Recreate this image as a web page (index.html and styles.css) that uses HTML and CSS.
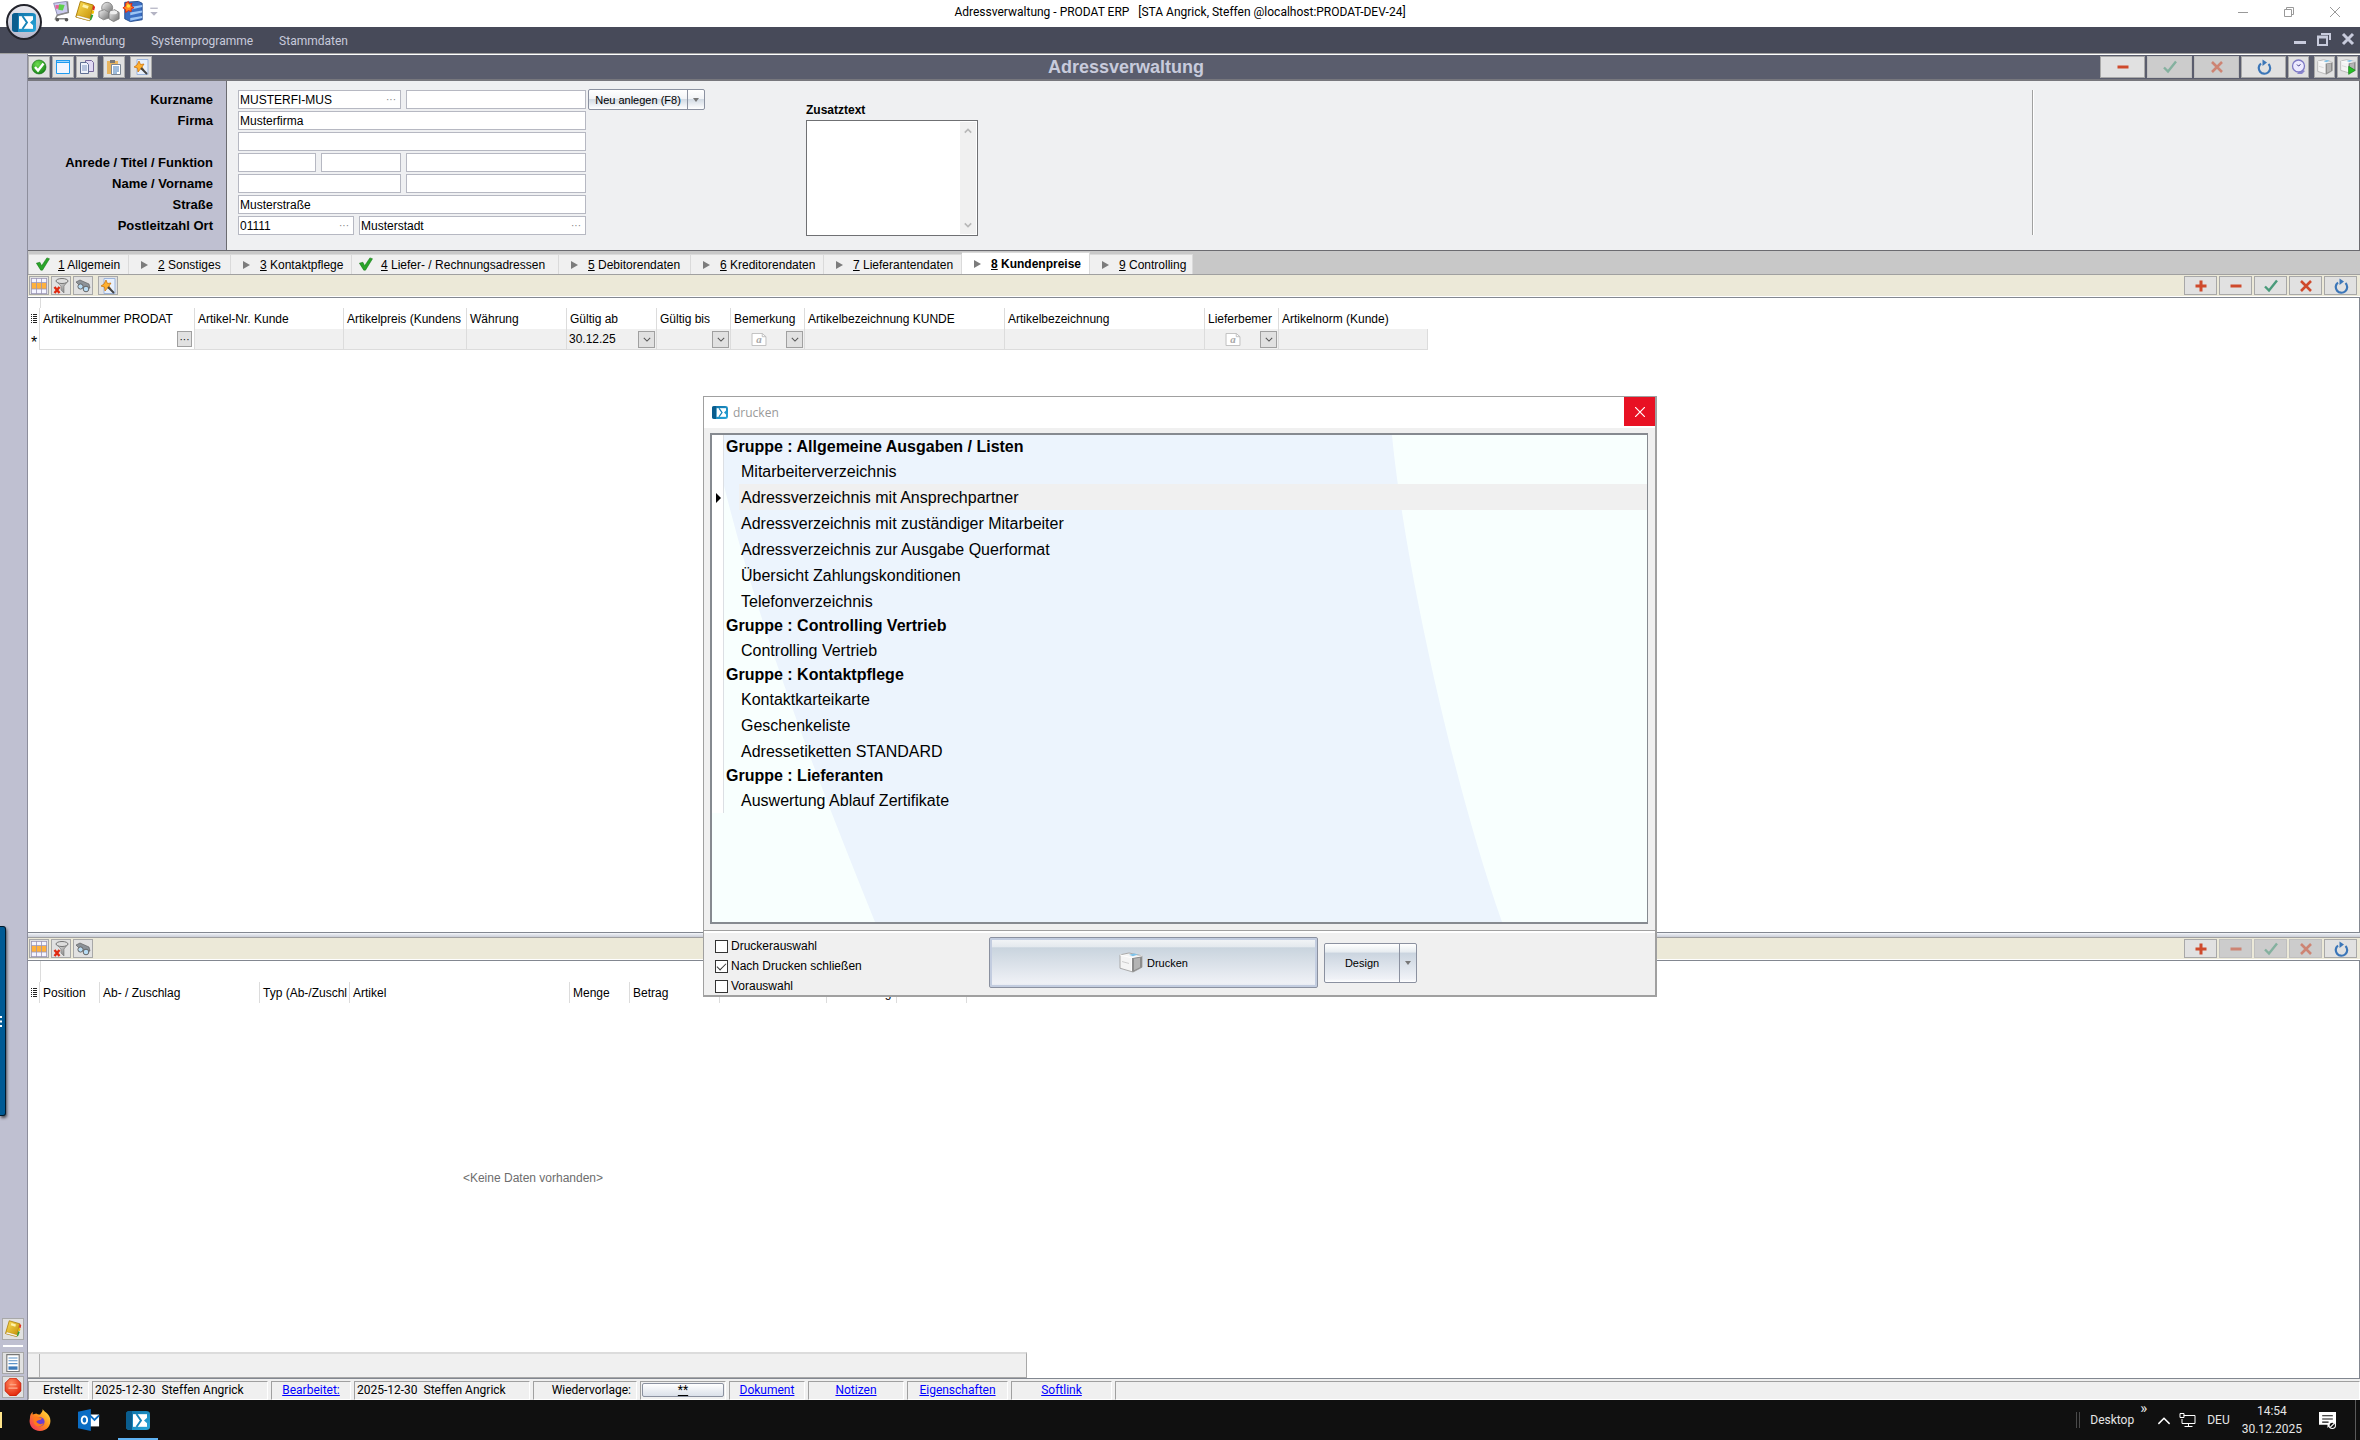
FILE: index.html
```html
<!DOCTYPE html>
<html lang="de">
<head>
    <meta charset="UTF-8">
    <meta name="viewport" content="width=device-width, initial-scale=1.0">
    <title>Adressverwaltung - PRODAT ERP</title>
    <link rel="stylesheet" href="styles.css">
</head>
<body>

    <!-- Symbole -->
    <svg class="defs" width="0" height="0" aria-hidden="true">
        <defs>
            <linearGradient id="gBlue" x1="0" y1="0" x2="1" y2="1"><stop offset="0" stop-color="#0d6ea3"/><stop offset="1" stop-color="#29a8dc"/></linearGradient>
            <linearGradient id="gGold" x1="0" y1="0" x2="1" y2="1"><stop offset="0" stop-color="#ffe25a"/><stop offset="1" stop-color="#c08a00"/></linearGradient>
            <linearGradient id="gGray" x1="0" y1="0" x2="1" y2="1"><stop offset="0" stop-color="#f4f4f4"/><stop offset="1" stop-color="#6e6e6e"/></linearGradient>
            <radialGradient id="gGreen" cx=".4" cy=".3" r=".8"><stop offset="0" stop-color="#6ddc4f"/><stop offset="1" stop-color="#0d7c10"/></radialGradient>
            <radialGradient id="gRed" cx=".4" cy=".3" r=".8"><stop offset="0" stop-color="#ff8a60"/><stop offset="1" stop-color="#e01a00"/></radialGradient>
            <linearGradient id="gFox" x1="1" y1="0" x2="0" y2="1"><stop offset="0" stop-color="#fff04a"/><stop offset=".5" stop-color="#ff8a1c"/><stop offset="1" stop-color="#f0246a"/></linearGradient>
            <symbol id="logo" viewBox="0 0 24 24" preserveAspectRatio="none">
                <rect x="0" y="0" width="24" height="24" rx="4" fill="url(#gBlue)"/>
                <path d="M0 4q0-4 4-4h2v24H4q-4 0-4-4z" fill="#0a5d8e"/>
                <path d="M7 4h14v16H7z" fill="#fff"/>
                <path d="M10.500 4l4.500 8-4.500 8" stroke="#1583b8" stroke-width="2" fill="none"/>
                <path d="M21 8.500L18 12l3 3.500z" fill="#1f97cc"/>
            </symbol>
            <symbol id="cart" viewBox="0 0 24 24">
                <path d="M4 3l14-2 2 12-12 3z" fill="#c9c9ee" stroke="#8d8db0"/>
                <path d="M6 5h4v4H6z" fill="#e8609a"/><path d="M10 4l6 1-2 6-5-1z" fill="#5ed04c"/>
                <path d="M19 1l1 12-12 3-2 4h13" stroke="#888" stroke-width="1.600" fill="none"/>
                <circle cx="8" cy="21" r="2" fill="#555"/><circle cx="18" cy="21" r="2" fill="#555"/>
            </symbol>
            <symbol id="book" viewBox="0 0 24 24">
                <path d="M7 1l14 4-4 17-15-4z" fill="url(#gGold)" stroke="#a87800"/>
                <path d="M2 18l15 4 1-2L4 16z" fill="#fff" stroke="#a87800" stroke-width=".5"/>
                <path d="M21 5l2 2-1 4-2-1z" fill="#e03020"/><path d="M20 10l2 2-1 3-2-1z" fill="#f0c000"/><path d="M19 15l2 1-2 5-2 1z" fill="#30a030"/>
                <path d="M10 4l6 2-1 3-6-2z" fill="#fff3a8"/>
            </symbol>
            <symbol id="parts" viewBox="0 0 24 24">
                <circle cx="10" cy="8" r="6" fill="url(#gGray)" stroke="#888"/>
                <path d="M1 12l6-2 5 3v6l-6 2-5-3z" fill="url(#gGray)" stroke="#888"/>
                <path d="M12 13l6-3 5 3v7l-6 3-5-3z" fill="url(#gGray)" stroke="#777"/>
                <ellipse cx="17" cy="13" rx="4" ry="2" fill="#eee"/>
            </symbol>
            <symbol id="server" viewBox="0 0 24 24">
                <path d="M3 2l15-1 4 2v18l-13 2-6-3z" fill="#3b6fc4" stroke="#234b8c"/>
                <path d="M9 7l13-2v2L9 10zM9 13l13-2v2L9 16zM9 19l13-2v2L9 22z" fill="#9cc4f4"/>
                <path d="M7 1l1 3 3-1-1 3 3 2-3 1 0 3-3-1-3 2 0-3-3-2 3-2 0-3z" fill="#ff8a20" stroke="#e02010"/>
                <circle cx="7" cy="6" r="2" fill="#ffe040"/>
            </symbol>
            <symbol id="ok" viewBox="0 0 16 16">
                <circle cx="8" cy="8" r="7" fill="url(#gGreen)" stroke="#0a6a0c" stroke-width=".6"/>
                <path d="M4 8l3 3.500 5.500-7" stroke="#fff" stroke-width="2.400" fill="none"/>
            </symbol>
            <symbol id="window" viewBox="0 0 16 16">
                <path d="M1.500 1.500h13v13h-13z" fill="#f2f6ff" stroke="#1e9bf0"/><path d="M1 1h14v3H1z" fill="#1e9bf0"/><path d="M2 2h12v.800H2z" fill="#bfe3ff"/>
            </symbol>
            <symbol id="copy" viewBox="0 0 16 16">
                <path d="M6.500 1.500h6l2 2v9h-8z" fill="#e2daf4" stroke="#77689c"/>
                <path d="M1.500 3.500h6l2 2v9h-8z" fill="#eef2fb" stroke="#5f6f94"/><path d="M3 7h5M3 9h5M3 11h5" stroke="#7f93c0"/>
            </symbol>
            <symbol id="paste" viewBox="0 0 16 16">
                <path d="M1 2h11v13H1z" fill="#e9b55f"/><path d="M4 1h5v3H4z" fill="#777"/>
                <path d="M5.500 5.500h9v10h-9z" fill="#fff" stroke="#7c8794"/><path d="M7 8h6M7 10h6M7 12h6M7 14h4" stroke="#3f78b8"/>
            </symbol>
            <symbol id="wizard" viewBox="0 0 16 16">
                <path d="M4 .500h11v15H4z" fill="#e8f0fc" stroke="#9db5dc"/>
                <path d="M6 2l1.500 3.500 3.500-.500-2 3 2 3-3.500-1L5 13l-.500-4L1 8l3-2z" fill="#ffb02e" stroke="#c86c00" stroke-width=".7"/>
                <path d="M8 9l6 6" stroke="#444" stroke-width="2"/>
            </symbol>
            <symbol id="minus" viewBox="0 0 16 16"><path d="M2.500 8h11" stroke="#cf4a2c" stroke-width="3"/></symbol>
            <symbol id="plus" viewBox="0 0 16 16"><path d="M2.500 8h11M8 2.500v11" stroke="#cf4a2c" stroke-width="3"/></symbol>
            <symbol id="check" viewBox="0 0 16 16"><path d="M2 8.500l4 4 8-10" stroke="#4a9b7b" stroke-width="2.400" fill="none"/></symbol>
            <symbol id="cross" viewBox="0 0 16 16"><path d="M3 3l10 10M13 3L3 13" stroke="#cf4a2c" stroke-width="2.600"/></symbol>
            <symbol id="refresh" viewBox="0 0 16 16"><path d="M5 4.500A5.700 5.700 0 1 0 12.500 5" stroke="#3b76b8" stroke-width="2.200" fill="none"/><path d="M6.500 .500l4.500 3-4.500 3.500z" fill="#3b76b8"/></symbol>
            <symbol id="clock" viewBox="0 0 16 16">
                <path d="M10 10l4 2-3 3H6z" fill="#8a86cc"/><circle cx="7.500" cy="7" r="6" fill="#eceaff" stroke="#7d79c4" stroke-width="1.300"/><path d="M7.500 7l2-1.500M7.500 7L6 5.500" stroke="#3a3680"/>
            </symbol>
            <symbol id="printer" viewBox="0 0 24 22" preserveAspectRatio="none">
                <path d="M1 3l9-2 13 3v12l-9 5-13-4z" fill="#f4f4f4" stroke="#a8a8a8"/>
                <path d="M12 6l11-2v12l-9 5-2-1z" fill="#8c8c8c"/><path d="M15 7l6-1v10l-6 3z" fill="#b4b4b4"/>
                <path d="M10 3l5-1.500 4 1-5 2z" fill="#7fc3ea"/><path d="M12.500 6v14M1 3l11 3 11-2" stroke="#fff" fill="none"/>
                <path d="M3 10l7 2" stroke="#ccc"/>
            </symbol>
            <symbol id="play" viewBox="0 0 24 24"><use href="#printer" width="24" height="22"/><path d="M13 11l10 6-10 6z" fill="#25c025" stroke="#128012"/></symbol>
            <symbol id="tick" viewBox="0 0 16 16"><path d="M1 7l4-1 2 4 6-9 3 1-8 13H6z" fill="#2aa52a" stroke="#137313" stroke-width=".6"/></symbol>
            <symbol id="grid" viewBox="0 0 16 16">
                <path d="M0 0h16v16H0z" fill="#f4f4ff"/><path d="M0 5h16v6H0z" fill="#ffb13c"/><path d="M0 .500h16M0 4.500h16M0 11h16M0 15.500h16M.500 0v16M5.500 0v16M10.500 0v16M15.500 0v16" stroke="#9a96b4" stroke-width=".8"/>
            </symbol>
            <symbol id="filter" viewBox="0 0 16 16">
                <path d="M3 3l5 5v4l3 3V8l4-5z" fill="url(#gGray)" stroke="#777" stroke-width=".6"/><ellipse cx="9" cy="3" rx="6" ry="2.500" fill="#ddd" stroke="#777"/>
                <path d="M1.500 9l5 6M6.500 9l-5 6" stroke="#e02a10" stroke-width="2.400"/>
            </symbol>
            <symbol id="search" viewBox="0 0 16 16">
                <path d="M1 4l4-2 9 4 1 4-4 1-6-3z" fill="#8c9298" stroke="#555" stroke-width=".6"/>
                <circle cx="5.500" cy="8.500" r="2.600" fill="#b8dcf4" stroke="#666"/><circle cx="11" cy="11" r="2.800" fill="#b8dcf4" stroke="#666"/>
            </symbol>
            <symbol id="memo" viewBox="0 0 16 14"><path d="M.500.500h11l4 3.500v9.500H.500z" fill="#fff" stroke="#bcbcbc"/><path d="M11.500.500V4h4" fill="none" stroke="#bcbcbc"/></symbol>
            <symbol id="chevron" viewBox="0 0 10 6"><path d="M1 1l4 4 4-4" stroke="#555" stroke-width="1.300" fill="none"/></symbol>
            <symbol id="caret" viewBox="0 0 6 4"><path d="M0 0h6L3 4z" fill="#777"/></symbol>
            <symbol id="doc" viewBox="0 0 16 16"><path d="M2.500 .500h11v15h-11z" fill="#fff" stroke="#777"/><path d="M4 3.500h8M4 6h8M4 8.500h8" stroke="#5c93c8"/><path d="M4 11h8v3H4z" fill="#3d7ab8"/></symbol>
            <symbol id="stop" viewBox="0 0 16 16"><path d="M5.500 0h5L15 4.500v7L10.500 16h-5L1 11.500v-7z" fill="url(#gRed)" stroke="#b81200" stroke-width=".6"/><path d="M4 9h8M5 6h6" stroke="#ffb090"/></symbol>
        </defs>
    </svg>

    <header class="titlebar">
        <button class="app-button" aria-label="Anwendungsmenü"><svg><use href="#logo"/></svg></button>
        <div class="quick">
            <button aria-label="Bestellung"><svg><use href="#cart"/></svg></button>
            <button aria-label="Adressen"><svg><use href="#book"/></svg></button>
            <button aria-label="Artikel"><svg><use href="#parts"/></svg></button>
            <button aria-label="Server"><svg><use href="#server"/></svg></button>
            <button class="more" aria-label="Anpassen"><svg viewBox="0 0 6 8"><path d="M0 1h6" stroke="#b4b4c4"/><path d="M0 4h6L3 7z" fill="#b4b4c4"/></svg></button>
        </div>
        <h1 class="window-title">Adressverwaltung - PRODAT ERP &nbsp; [STA Angrick, Steffen @localhost:PRODAT-DEV-24]</h1>
        <div class="window-buttons">
            <button aria-label="Minimieren"><svg viewBox="0 0 12 12"><path d="M1 6.500h10" stroke="#999"/></svg></button>
            <button aria-label="Wiederherstellen"><svg viewBox="0 0 12 12"><path d="M1.500 3.500h7v7h-7zM3.500 3V1.500h7v7H9" fill="none" stroke="#999"/></svg></button>
            <button aria-label="Schließen"><svg viewBox="0 0 12 12"><path d="M1 1l10 10M11 1L1 11" stroke="#999"/></svg></button>
        </div>
    </header>

    <nav class="menubar">
        <button>Anwendung</button>
        <button>Systemprogramme</button>
        <button>Stammdaten</button>
        <div class="mdi-buttons">
            <button aria-label="Fenster minimieren"><svg viewBox="0 0 14 14"><path d="M1 10.500h12" stroke="#c8cbdc" stroke-width="3"/></svg></button>
            <button aria-label="Fenster wiederherstellen"><svg viewBox="0 0 14 14"><path d="M1 5h9v8H1zM4 2h9v6" fill="none" stroke="#c8cbdc" stroke-width="2"/><path d="M0 5h11" stroke="#c8cbdc" stroke-width="3"/></svg></button>
            <button aria-label="Fenster schließen"><svg viewBox="0 0 14 14"><path d="M2 2l10 10M12 2L2 12" stroke="#c8cbdc" stroke-width="3"/></svg></button>
        </div>
    </nav>

    <div class="workspace">
        <aside class="sidebar">
            <div class="flyout"><svg viewBox="0 0 3 11"><path d="M0 1h2M0 5.500h2M0 10h2" stroke="#fff" stroke-width="2"/></svg></div>
            <button class="tool side" aria-label="Adressen"><svg><use href="#book"/></svg></button>
            <hr>
            <button class="tool side" aria-label="Protokoll"><svg><use href="#doc"/></svg></button>
            <button class="tool side" aria-label="Stopp"><svg><use href="#stop"/></svg></button>
        </aside>

        <main class="main">
            <div class="toolbar">
                <button class="tool" aria-label="Übernehmen"><svg><use href="#ok"/></svg></button>
                <button class="tool" aria-label="Neues Fenster"><svg><use href="#window"/></svg></button>
                <button class="tool" aria-label="Kopieren"><svg><use href="#copy"/></svg></button>
                <button class="tool spaced" aria-label="Einfügen"><svg><use href="#paste"/></svg></button>
                <button class="tool spaced" aria-label="Assistent"><svg><use href="#wizard"/></svg></button>
                <h2 class="module-title">Adressverwaltung</h2>
                <div class="record">
                    <button class="tool wide" aria-label="Löschen"><svg><use href="#minus"/></svg></button>
                    <button class="tool wide" aria-label="Speichern" disabled><svg><use href="#check"/></svg></button>
                    <button class="tool wide" aria-label="Verwerfen" disabled><svg><use href="#cross"/></svg></button>
                    <button class="tool wide" aria-label="Aktualisieren"><svg><use href="#refresh"/></svg></button>
                    <button class="tool" aria-label="Verlauf"><svg><use href="#clock"/></svg></button>
                    <button class="tool spaced" aria-label="Drucken"><svg><use href="#printer"/></svg></button>
                    <button class="tool" aria-label="Direkt drucken"><svg><use href="#play"/></svg></button>
                </div>
            </div>

            <form class="address">
                <div class="labels">
                    <label for="kurzname">Kurzname</label>
                    <label for="firma">Firma</label>
                    <span></span>
                    <label for="anrede">Anrede / Titel / Funktion</label>
                    <label for="name">Name / Vorname</label>
                    <label for="strasse">Straße</label>
                    <label for="plz">Postleitzahl Ort</label>
                </div>
                <div class="fields">
                    <div class="field-row">
                        <span class="lookup w-m"><input type="text" id="kurzname" value="MUSTERFI-MUS"><button type="button" aria-label="Kurzname suchen">···</button></span>
                        <input type="text" class="w-rest" aria-label="Suchname">
                    </div>
                    <div class="field-row"><input type="text" id="firma" class="w-rest" value="Musterfirma"></div>
                    <div class="field-row"><input type="text" class="w-rest" aria-label="Firma Zeile 2"></div>
                    <div class="field-row">
                        <input type="text" id="anrede" class="w-s" aria-label="Anrede">
                        <input type="text" class="w-t" aria-label="Titel">
                        <input type="text" class="w-rest" aria-label="Funktion">
                    </div>
                    <div class="field-row">
                        <input type="text" id="name" class="w-m">
                        <input type="text" class="w-rest" aria-label="Vorname">
                    </div>
                    <div class="field-row"><input type="text" id="strasse" class="w-rest" value="Musterstraße"></div>
                    <div class="field-row">
                        <span class="lookup w-p"><input type="text" id="plz" value="01111"><button type="button" aria-label="PLZ suchen">···</button></span>
                        <span class="lookup w-rest"><input type="text" value="Musterstadt" aria-label="Ort"><button type="button" aria-label="Ort suchen">···</button></span>
                    </div>
                </div>
                <div class="split-button create">
                    <button type="button">Neu anlegen (F8)</button>
                    <button type="button" aria-label="Weitere Optionen"><svg><use href="#caret"/></svg></button>
                </div>
                <div class="extra">
                    <label for="zusatz">Zusatztext</label>
                    <div class="memo-box">
                        <textarea id="zusatz"></textarea>
                        <div class="scroll">
                            <svg viewBox="0 0 10 6"><path d="M1 5l4-4 4 4" stroke="#b8b8b8" stroke-width="2" fill="none"/></svg>
                            <svg viewBox="0 0 10 6"><path d="M1 1l4 4 4-4" stroke="#b8b8b8" stroke-width="2" fill="none"/></svg>
                        </div>
                    </div>
                </div>
                <div class="divider"></div>
            </form>

            <div class="tabs" role="tablist">
                <button role="tab"><svg class="done"><use href="#tick"/></svg><span><u>1</u> Allgemein</span></button>
                <button role="tab"><i></i><span><u>2</u> Sonstiges</span></button>
                <button role="tab"><i></i><span><u>3</u> Kontaktpflege</span></button>
                <button role="tab"><svg class="done"><use href="#tick"/></svg><span><u>4</u> Liefer- / Rechnungsadressen</span></button>
                <button role="tab"><i></i><span><u>5</u> Debitorendaten</span></button>
                <button role="tab"><i></i><span><u>6</u> Kreditorendaten</span></button>
                <button role="tab"><i></i><span><u>7</u> Lieferantendaten</span></button>
                <button role="tab" aria-selected="true"><i></i><span><u>8</u> Kundenpreise</span></button>
                <button role="tab"><i></i><span><u>9</u> Controlling</span></button>
            </div>

            <div class="gridbar">
                <button class="tool" aria-label="Spalten"><svg><use href="#grid"/></svg></button>
                <button class="tool" aria-label="Filter löschen"><svg><use href="#filter"/></svg></button>
                <button class="tool" aria-label="Suchen"><svg><use href="#search"/></svg></button>
                <button class="tool spaced" aria-label="Assistent"><svg><use href="#wizard"/></svg></button>
                <div class="actions">
                    <button class="tool" aria-label="Neu"><svg><use href="#plus"/></svg></button>
                    <button class="tool" aria-label="Löschen"><svg><use href="#minus"/></svg></button>
                    <button class="tool" aria-label="Speichern"><svg><use href="#check"/></svg></button>
                    <button class="tool" aria-label="Verwerfen"><svg><use href="#cross"/></svg></button>
                    <button class="tool" aria-label="Aktualisieren"><svg><use href="#refresh"/></svg></button>
                </div>
            </div>

            <section class="panel prices">
                <table class="data prices-table">
                    <colgroup><col class="c11"><col class="c155"><col class="c149"><col class="c123"><col class="c100"><col class="c90"><col class="c74"><col class="c74"><col class="c200"><col class="c200"><col class="c74"><col class="c150"></colgroup>
                    <thead>
                        <tr>
                            <th><svg class="rows" viewBox="0 0 6 10"><path d="M0 .500h1M2 .500h4M0 2.500h1M2 2.500h4M0 4.500h1M2 4.500h4M0 6.500h1M2 6.500h4M0 8.500h1M2 8.500h4" stroke="#222"/></svg></th>
                            <th>Artikelnummer PRODAT</th><th>Artikel-Nr. Kunde</th><th>Artikelpreis (Kundens</th><th>Währung</th><th>Gültig ab</th><th>Gültig bis</th><th>Bemerkung</th><th>Artikelbezeichnung KUNDE</th><th>Artikelbezeichnung</th><th>Lieferbemer</th><th>Artikelnorm (Kunde)</th>
                        </tr>
                    </thead>
                    <tbody>
                        <tr>
                            <td class="new-row">*</td>
                            <td><div class="cell"><button class="mini dots" aria-label="Artikel wählen">···</button></div></td>
                            <td></td><td></td><td></td>
                            <td><div class="cell"><span>30.12.25</span><button class="mini" aria-label="Datum wählen"><svg><use href="#chevron"/></svg></button></div></td>
                            <td><div class="cell"><button class="mini" aria-label="Datum wählen"><svg><use href="#chevron"/></svg></button></div></td>
                            <td><div class="cell"><span class="memo"><svg><use href="#memo"/></svg><b>a</b></span><button class="mini" aria-label="Bemerkung öffnen"><svg><use href="#chevron"/></svg></button></div></td>
                            <td></td><td></td>
                            <td><div class="cell"><span class="memo"><svg><use href="#memo"/></svg><b>a</b></span><button class="mini" aria-label="Lieferbemerkung öffnen"><svg><use href="#chevron"/></svg></button></div></td>
                            <td></td>
                        </tr>
                    </tbody>
                </table>
            </section>

            <div class="splitter"></div>

            <div class="gridbar">
                <button class="tool" aria-label="Spalten"><svg><use href="#grid"/></svg></button>
                <button class="tool" aria-label="Filter löschen"><svg><use href="#filter"/></svg></button>
                <button class="tool" aria-label="Suchen"><svg><use href="#search"/></svg></button>
                <div class="actions">
                    <button class="tool" aria-label="Neu"><svg><use href="#plus"/></svg></button>
                    <button class="tool" aria-label="Löschen" disabled><svg><use href="#minus"/></svg></button>
                    <button class="tool" aria-label="Speichern" disabled><svg><use href="#check"/></svg></button>
                    <button class="tool" aria-label="Verwerfen" disabled><svg><use href="#cross"/></svg></button>
                    <button class="tool" aria-label="Aktualisieren"><svg><use href="#refresh"/></svg></button>
                </div>
            </div>

            <section class="panel charges">
                <table class="data charges-table">
                    <colgroup><col class="c11"><col class="c60"><col class="c160"><col class="c90"><col class="c220"><col class="c60"><col class="c90"><col class="c107"><col class="c70"><col class="c70"><col class="c60"></colgroup>
                    <thead>
                        <tr>
                            <th><svg class="rows" viewBox="0 0 6 10"><path d="M0 .500h1M2 .500h4M0 2.500h1M2 2.500h4M0 4.500h1M2 4.500h4M0 6.500h1M2 6.500h4M0 8.500h1M2 8.500h4" stroke="#222"/></svg></th>
                            <th>Position</th><th>Ab- / Zuschlag</th><th>Typ (Ab-/Zuschl</th><th>Artikel</th><th>Menge</th><th>Betrag</th><th>Prozent</th><th>Bemerkung</th><th>Status Kont</th><th>Skontofäh.</th>
                        </tr>
                    </thead>
                </table>
                <p class="empty">&lt;Keine Daten vorhanden&gt;</p>
                <div class="grid-footer"><span></span></div>
            </section>

            <footer class="status">
                <span class="s61 right">Erstellt:</span>
                <span class="s176">2025-12-30 &nbsp;Steffen Angrick</span>
                <span class="s80 center"><a href="#">Bearbeitet:</a></span>
                <span class="s176">2025-12-30 &nbsp;Steffen Angrick</span>
                <span class="s104 right">Wiedervorlage:</span>
                <span class="s86 slot"><button><u>**</u></button></span>
                <span class="s76 center"><a href="#">Dokument</a></span>
                <span class="s96 center"><a href="#">Notizen</a></span>
                <span class="s101 center"><a href="#">Eigenschaften</a></span>
                <span class="s101 center"><a href="#">Softlink</a></span>
                <span class="fill"></span>
            </footer>
        </main>
    </div>

    <footer class="taskbar">
        <div class="apps">
            <span class="sliver"></span>
            <button aria-label="Firefox"><svg viewBox="0 0 24 24"><path d="M15 0c1 3 6 4 8 10 2 8-4 14-11 14S-1 18 1 10c0-3 1-5 3-7v3l4-1c1 1 2 1 4 1 2-2 3-4 3-6z" fill="url(#gFox)"/><circle cx="12" cy="14" r="5" fill="#6a3fd0"/><path d="M5 9c4-2 6 1 9 1-1 3-4 1-6 4 1 2 5 4 8 1-1 5-10 6-11-1z" fill="#ff7a1c"/></svg></button>
            <button aria-label="Outlook"><svg viewBox="0 0 24 24"><path d="M13 6h10v13H13z" fill="#fff"/><path d="M13 7l5 5 5-5" stroke="#0a6cc4" stroke-width="2" fill="none"/><path d="M0 3l14-3v24L0 21z" fill="#0a6cc4"/><ellipse cx="7" cy="12" rx="3" ry="4" fill="none" stroke="#fff" stroke-width="2"/></svg></button>
            <button class="active" aria-label="PRODAT ERP"><svg><use href="#logo"/></svg></button>
        </div>
        <div class="tray">
            <span class="grip"></span>
            <span class="desk">Desktop</span>
            <span class="expand">»</span>
            <svg class="up" viewBox="0 0 12 8"><path d="M1 7l5-5 5 5" stroke="#fff" stroke-width="1.300" fill="none"/></svg>
            <svg class="net" viewBox="0 0 16 16"><path d="M4 3.500h11.500v8H2.500V7M.500 1.500h4v4h-4zM9 12v2.500M5 14.500h8" stroke="#fff" fill="none"/></svg>
            <span class="lang">DEU</span>
            <time class="clock">14:54<br>30.12.2025</time>
            <svg class="note" viewBox="0 0 16 16"><path d="M0 0h16v12h-5l-3 3v-3H0z" fill="#fff"/><path d="M3 3.500h10M3 6.500h10M3 9.500h6" stroke="#111"/><circle cx="12.500" cy="12.500" r="3" fill="#111" stroke="#fff"/><path d="M10.500 14.500l4-4" stroke="#fff"/></svg>
            <span class="show-desktop"></span>
        </div>
    </footer>

    <!-- Druckdialog -->
    <div class="overlay">
        <div class="dialog" role="dialog" aria-labelledby="dialogTitle">
            <div class="dialog-head">
                <svg><use href="#logo"/></svg>
                <span id="dialogTitle">drucken</span>
                <button class="close" aria-label="Schließen"><svg viewBox="0 0 10 10"><path d="M0 0l10 10M10 0L0 10" stroke="#fff" stroke-width="1.200"/></svg></button>
            </div>
            <div class="report-list">
                <svg class="backdrop" viewBox="0 0 935 487" preserveAspectRatio="none"><path d="M0 0H680C690 108 735 330 790 487H163C100 330 40 180 0 0z" fill="#ecf4fd"/></svg>
                <ul class="reports">
                    <li class="group">Gruppe : Allgemeine Ausgaben / Listen</li>
                    <li>Mitarbeiterverzeichnis</li>
                    <li class="current">Adressverzeichnis mit Ansprechpartner</li>
                    <li>Adressverzeichnis mit zuständiger Mitarbeiter</li>
                    <li>Adressverzeichnis zur Ausgabe Querformat</li>
                    <li>Übersicht Zahlungskonditionen</li>
                    <li>Telefonverzeichnis</li>
                    <li class="group">Gruppe : Controlling Vertrieb</li>
                    <li>Controlling Vertrieb</li>
                    <li class="group">Gruppe : Kontaktpflege</li>
                    <li>Kontaktkarteikarte</li>
                    <li>Geschenkeliste</li>
                    <li>Adressetiketten STANDARD</li>
                    <li class="group">Gruppe : Lieferanten</li>
                    <li>Auswertung Ablauf Zertifikate</li>
                </ul>
            </div>
            <div class="dialog-foot">
                <div class="checks">
                    <label><input type="checkbox">Druckerauswahl</label>
                    <label><input type="checkbox" checked>Nach Drucken schließen</label>
                    <label><input type="checkbox">Vorauswahl</label>
                </div>
                <button class="print"><svg><use href="#printer"/></svg>Drucken</button>
                <div class="split-button design">
                    <button>Design</button>
                    <button aria-label="Design-Optionen"><svg><use href="#caret"/></svg></button>
                </div>
            </div>
        </div>
    </div>

</body>
</html>
```
FILE: styles.css
```css
* {
    box-sizing: border-box;
}
body {
    margin: 0;
    height: 100vh;
    display: flex;
    flex-direction: column;
    overflow: hidden;
    font-family: "Liberation Sans", Arial, sans-serif;
    font-size: 12px;
    color: #000;
    background-color: #bfc0d1;
}
button, input, textarea {
    font: inherit;
    color: inherit;
    margin: 0;
    padding: 0;
}
button {
    border: none;
    background: none;
}
svg {
    display: block;
    flex: none;
}
.defs {
    position: absolute;
}

/* Titelleiste */
.titlebar {
    position: relative;
    height: 27px;
    flex: none;
    display: flex;
    justify-content: center;
    background-color: #fff;
    font-family: Roboto, "Open Sans", sans-serif;
}
.app-button {
    position: absolute;
    left: 6px;
    top: 4px;
    z-index: 2;
    width: 36px;
    height: 36px;
    display: flex;
    align-items: center;
    justify-content: center;
    border: 2px solid #23242c;
    border-radius: 50%;
    background: linear-gradient(#e8e8ee, #b6b8cc);
}
.app-button svg {
    width: 24px;
    height: 19px;
}
.quick {
    position: absolute;
    left: 50px;
    top: 0;
    display: flex;
    gap: 2px;
}
.quick svg {
    width: 22px;
    height: 23px;
}
.quick .more svg {
    width: 8px;
    height: 10px;
    margin-left: 4px;
}
.window-title {
    margin: 0;
    font-size: 12px;
    font-weight: normal;
    line-height: 24px;
}
.window-buttons {
    position: absolute;
    right: 19px;
    top: 6px;
    display: flex;
    gap: 34px;
}
.window-buttons svg {
    width: 12px;
    height: 12px;
}

/* Menü */
.menubar {
    height: 26px;
    flex: none;
    display: flex;
    align-items: center;
    gap: 26px;
    padding: 2px 5px 0 62px;
    background-color: #474a59;
    color: #c8cbdc;
    font-family: Roboto, "Open Sans", sans-serif;
}
.mdi-buttons {
    display: flex;
    gap: 10px;
    margin-left: auto;
    padding-bottom: 4px;
}
.mdi-buttons svg {
    width: 14px;
    height: 14px;
}

.workspace {
    flex: 1;
    min-height: 0;
    display: flex;
}
.sidebar {
    position: relative;
    width: 27px;
    flex: none;
    display: flex;
    flex-direction: column;
    align-items: flex-start;
    justify-content: flex-end;
    gap: 2px;
    padding: 0 0 2px 2px;
    border-top: 1px solid #a0a0a0;
    background-color: #bfc0d1;
}
.sidebar hr {
    width: 20px;
    margin: 3px 1px;
    border: solid #fff;
    border-width: 0 0 2px;
}
.flyout {
    position: absolute;
    left: 0;
    top: 872px;
    width: 6px;
    height: 190px;
    display: flex;
    align-items: center;
    border: 1px solid #001a2c;
    border-left: none;
    border-radius: 0 3px 3px 0;
    background-color: #005a94;
    box-shadow: 1px 2px 3px rgba(0, 0, 0, 0.6);
}
.flyout svg {
    width: 3px;
    height: 11px;
}

/* Werkzeugknöpfe */
.tool {
    width: 22px;
    height: 22px;
    flex: none;
    display: flex;
    align-items: center;
    justify-content: center;
    border: 1px solid #a8a8a8;
    background-color: #e1e1e1;
}
.tool svg {
    width: 16px;
    height: 16px;
}
.tool:disabled {
    background-color: #cccccc;
    border-color: #bfbfbf;
}
.tool:disabled svg {
    opacity: 0.55;
}
.side svg {
    width: 18px;
    height: 18px;
}

.main {
    flex: 1;
    min-width: 0;
    display: flex;
    flex-direction: column;
    border-top: 1px solid #a0a0a0;
    border-left: 1px solid #8d8e9c;
}
.toolbar {
    height: 27px;
    flex: none;
    display: flex;
    align-items: center;
    gap: 2px;
    padding-right: 2px;
    border-top: 1px solid #fff;
    border-bottom: 2px solid #77777d;
    background-color: #5a5d6d;
}
.toolbar .tool.spaced {
    margin-left: 3px;
}
.record {
    display: flex;
    gap: 2px;
}
.record .tool {
    width: 21px;
}
.record .wide {
    width: 45px;
}
.module-title {
    flex: 1;
    margin: 0;
    text-align: center;
    font-size: 18px;
    line-height: 22px;
    color: #c8cbdc;
}

/* Adressformular */
.address {
    height: 170px;
    flex: none;
    display: flex;
    border-right: 1px solid #6b6b70;
    border-bottom: 1px solid #6b6b70;
    background-color: #eff0f2;
}
.labels {
    width: 199px;
    flex: none;
    padding: 9px 13px 0 0;
    border-right: 1px solid #6b6b70;
    background-color: #bfc0d1;
    text-align: right;
    font-size: 13px;
    font-weight: bold;
}
.labels label, .labels span {
    display: block;
    height: 21px;
    line-height: 20px;
}
.fields {
    width: 348px;
    margin: 9px 0 0 11px;
}
.field-row {
    display: flex;
    gap: 5px;
    height: 21px;
}
.field-row > * {
    height: 19px;
    min-width: 0;
    border: 1px solid #b6b8c2;
    background-color: #fff;
}
.field-row input {
    padding: 0 1px;
}
.w-s {
    width: 78px;
}
.w-t {
    width: 80px;
}
.w-m {
    width: 163px;
}
.w-p {
    width: 116px;
}
.w-rest {
    flex: 1;
}
.lookup {
    display: flex;
}
.lookup input {
    flex: 1;
    min-width: 0;
    border: none;
    background: none;
}
.lookup button {
    width: 18px;
    color: #808080;
    font-size: 10px;
}
.split-button {
    display: flex;
    border: 1px solid #8b91a0;
    border-radius: 2px;
    background: linear-gradient(#ffffff 0%, #e8edf1 20%, #cbd5e0 25%, #f0f2f7 92%, #ffffff 100%);
}
.split-button button {
    display: flex;
    align-items: center;
    justify-content: center;
    font-size: 11px;
}
.split-button button:first-child {
    flex: 1;
    border-right: 1px solid #8b91a0;
}
.split-button button:last-child {
    width: 16px;
}
.split-button svg {
    width: 6px;
    height: 4px;
}
.create {
    width: 117px;
    height: 21px;
    margin: 8px 0 0 2px;
    background: linear-gradient(#ffffff 0%, #f2f4f7 45%, #d3dbe4 50%, #ffffff 100%);
}
.extra {
    margin: 21px 0 0 101px;
    font-weight: bold;
}
.extra label {
    display: block;
    height: 18px;
    line-height: 16px;
}
.memo-box {
    width: 172px;
    height: 116px;
    display: flex;
    padding: 1px;
    border: 1px solid #6f7073;
    background-color: #fff;
}
.memo-box textarea {
    flex: 1;
    min-width: 0;
    border: none;
    resize: none;
}
.scroll {
    width: 16px;
    display: flex;
    flex-direction: column;
    justify-content: space-between;
    align-items: center;
    padding: 6px 0;
    background-color: #f0f0f0;
}
.scroll svg {
    width: 8px;
    height: 6px;
}
.divider {
    width: 2px;
    height: 145px;
    margin: 9px 325px 0 auto;
    border-left: 1px solid #a0a0a0;
    border-right: 1px solid #fff;
}

/* Reiter */
.tabs {
    height: 23px;
    flex: none;
    display: grid;
    grid-template-columns: 100px 102px 121px 207px 132px 133px 138px 128px 103px;
    align-items: end;
    padding-left: 1px;
    background-color: #c8c8c8;
}
.tabs button {
    height: 20px;
    display: flex;
    align-items: center;
    padding-left: 8px;
    white-space: nowrap;
    border: 1px solid #dadada;
    border-width: 1px 1px 0 0;
    background-color: #f0f0f0;
}
.tabs button[aria-selected="true"] {
    height: 22px;
    background-color: #fff;
    font-weight: bold;
}
.tabs i {
    width: 0;
    margin: 0 10px 0 4px;
    border: solid transparent;
    border-width: 4px 0 4px 7px;
    border-left-color: #7c7c7c;
}
.tabs .done {
    width: 15px;
    height: 14px;
    margin: 0 8px 2px -2px;
}

.gridbar {
    height: 24px;
    flex: none;
    display: flex;
    gap: 2px;
    padding: 1px 3px 0 1px;
    border-top: 1px solid #a0a0a0;
    border-bottom: 1px solid #828790;
    background-color: #ece9d8;
    box-shadow: inset 0 -1px #fff;
}
.gridbar .tool {
    width: 20px;
    height: 19px;
}
.gridbar .tool.spaced {
    margin-left: 3px;
}
.gridbar .actions {
    display: flex;
    gap: 2px;
    margin-left: auto;
}
.gridbar .actions .tool {
    width: 33px;
}

/* Tabellen */
.panel {
    min-height: 0;
    display: flex;
    flex-direction: column;
    align-items: flex-start;
    border-right: 1px solid #828790;
    background-color: #fff;
}
.panel::before {
    content: "";
    width: 12px;
    height: 10px;
    flex: none;
    border-right: 1px solid #dcdcdc;
}
.prices {
    flex: 634;
}
.charges {
    flex: 417;
    border-bottom: 1px solid #828790;
}
.charges::before {
    height: 21px;
}
.data {
    flex: none;
    table-layout: fixed;
    border-collapse: separate;
    border-spacing: 0;
}
.prices-table {
    width: 1400px;
}
.charges-table {
    width: 998px;
}
.c11 { width: 11px; }
.c60 { width: 60px; }
.c70 { width: 70px; }
.c74 { width: 74px; }
.c90 { width: 90px; }
.c100 { width: 100px; }
.c107 { width: 107px; }
.c123 { width: 123px; }
.c149 { width: 149px; }
.c150 { width: 150px; }
.c155 { width: 155px; }
.c160 { width: 160px; }
.c200 { width: 200px; }
.c220 { width: 220px; }
.data th, .data td {
    height: 21px;
    padding: 0 0 0 3px;
    overflow: hidden;
    white-space: nowrap;
    text-align: left;
    font-weight: normal;
    border-left: 1px solid #dcdcdc;
}
.data td {
    background-color: #f0f0f0;
    border-bottom: 1px solid #dcdcdc;
}
.data td:last-child {
    border-right: 1px solid #dcdcdc;
}
.data th:first-child, .data td:first-child {
    border-left: none;
    border-bottom: none;
}
.data td:first-child, .data td:nth-child(2) {
    background-color: #fff;
}
.data .new-row {
    padding-top: 5px;
    font-size: 16px;
    line-height: 15px;
}
.rows {
    width: 6px;
    height: 10px;
}
.cell {
    display: flex;
    align-items: center;
    justify-content: space-between;
    margin-left: -1px;
}
.cell .mini {
    width: 17px;
    height: 17px;
    display: flex;
    align-items: center;
    justify-content: center;
    margin: 0 1px 0 auto;
    border: 1px solid #a0a0a0;
    background-color: #e1e1e1;
}
.mini svg {
    width: 8px;
    height: 5px;
}
.cell .dots {
    width: 15px;
    height: 16px;
    margin-right: 2px;
    font-size: 10px;
}
.memo {
    display: grid;
    place-items: center;
    margin-left: 18px;
    color: #a8a8a8;
    font: italic 11px/13px "Liberation Serif", serif;
}
.memo > * {
    grid-area: 1 / 1;
}
.memo svg {
    width: 16px;
    height: 13px;
}
.splitter {
    height: 5px;
    flex: none;
    border-top: 1px solid #828790;
    background: linear-gradient(#f4f6fa, #c9ccd6);
}
.empty {
    width: 988px;
    margin: 167px 0 0 11px;
    text-align: center;
    color: #6d6d6d;
    line-height: 16px;
}
.grid-footer {
    width: 999px;
    height: 26px;
    margin-top: auto;
    padding-left: 11px;
    border: solid #a8a8a8;
    border-width: 0 1px 1px 0;
    border-top: 2px solid #dcdcdc;
    background-color: #f0f0f0;
}
.grid-footer span {
    display: block;
    height: 100%;
    border-left: 1px solid #b0b0b0;
}

/* Statuszeile */
.status {
    height: 21px;
    flex: none;
    display: flex;
    gap: 3px;
    padding-top: 2px;
    background-color: #f0f0f0;
    font-family: Roboto, "Open Sans", sans-serif;
}
.status > span {
    height: 19px;
    padding: 0 2px;
    line-height: 17px;
    white-space: nowrap;
    border: 1px solid #a0a0a0;
    border-right-color: #fff;
    border-bottom-color: #fff;
}
.status .right {
    text-align: right;
    padding-right: 5px;
}
.status .center {
    text-align: center;
}
.status a {
    color: #0000ff;
}
.s61 { width: 61px; }
.s76 { width: 76px; }
.s80 { width: 80px; }
.s86 { width: 86px; }
.s96 { width: 96px; }
.s101 { width: 101px; }
.s104 { width: 104px; }
.s176 { width: 176px; }
.status .fill {
    flex: 1;
}
.status .slot {
    padding: 1px;
}
.slot button {
    width: 100%;
    height: 14px;
    display: block;
    border: 1px solid #8b91a0;
    border-radius: 2px;
    background: linear-gradient(#fff, #dbe1ea);
    line-height: 10px;
}

/* Taskleiste */
.taskbar {
    height: 40px;
    flex: none;
    display: flex;
    justify-content: space-between;
    background-color: #101010;
    color: #e6e6e6;
    font-family: Roboto, "Open Sans", sans-serif;
}
.apps {
    display: flex;
    align-items: center;
}
.sliver {
    width: 2px;
    height: 16px;
    margin-right: 18px;
    background-color: #ffe58a;
}
.apps button {
    width: 40px;
    height: 40px;
    margin-right: 9px;
    display: flex;
    align-items: center;
    justify-content: center;
}
.apps svg {
    width: 24px;
    height: 22px;
}
.apps .active svg {
    height: 19px;
}
.apps .active {
    border: solid transparent;
    border-width: 2px 0;
    border-bottom-color: #5fb2f2;
}
.tray {
    display: flex;
    align-items: center;
    padding-right: 4px;
}
.grip {
    width: 4px;
    height: 16px;
    margin-right: 10px;
    border: solid #4a4a4a;
    border-width: 0 1px;
}
.expand {
    align-self: flex-start;
    margin: 0 10px 0 6px;
    font-size: 15px;
    line-height: 17px;
}
.up {
    width: 14px;
    height: 9px;
    margin-right: 8px;
}
.net {
    width: 17px;
    height: 16px;
    margin-right: 11px;
}
.clock {
    margin: 0 17px 0 12px;
    line-height: 18px;
    text-align: center;
}
.note {
    width: 17px;
    height: 17px;
}
.show-desktop {
    align-self: stretch;
    margin-left: 19px;
    border-left: 1px solid #5a5a5a;
}

/* Dialog */
.overlay {
    position: absolute;
    inset: 0;
    display: flex;
    justify-content: center;
    align-items: flex-start;
    padding-top: 396px;
    pointer-events: none;
}
.dialog {
    width: 954px;
    pointer-events: auto;
    border: 1px solid #a0a0a0;
    border-width: 1px 2px 2px 1px;
    background-color: #f0f0f0;
}
.dialog-head {
    height: 31px;
    display: flex;
    align-items: center;
    padding-left: 8px;
    background-color: #fff;
    color: #999;
    font-family: "Open Sans", "Noto Sans", sans-serif;
}
.dialog-head > svg {
    width: 16px;
    height: 13px;
    margin-right: 5px;
}
.dialog-head .close {
    width: 31px;
    height: 29px;
    display: flex;
    align-items: center;
    justify-content: center;
    align-self: flex-start;
    margin-left: auto;
    background-color: #e81123;
}
.close svg {
    width: 10px;
    height: 10px;
}
.report-list {
    display: grid;
    height: 491px;
    margin: 5px 7px 6px 6px;
    border: 2px solid #868a90;
    border-right-width: 1px;
    background-color: #f8fffe;
}
.report-list > * {
    grid-area: 1 / 1;
}
.backdrop {
    width: 100%;
    height: 100%;
}
.reports {
    align-self: start;
    margin: 0;
    padding: 0;
    list-style: none;
    font-size: 16px;
    background: linear-gradient(to right, #fff 11px, #dcdfe4 11px, #dcdfe4 12px, transparent 12px);
}
.reports li {
    height: 26px;
    margin-left: 27px;
    padding: 1px 0 0 2px;
    line-height: 26px;
}
.reports .group {
    height: 23px;
    margin-left: 12px;
    padding-top: 0;
    line-height: 23px;
    font-weight: bold;
}
.reports .current {
    display: flex;
    align-items: center;
    background-color: #f0f0f0;
}
.reports .current::before {
    content: "";
    margin: 0 20px 0 -25px;
    border: solid transparent;
    border-width: 5px 0 5px 5px;
    border-left-color: #000;
}
.dialog-foot {
    height: 65px;
    display: flex;
    align-items: flex-start;
    padding: 5px 0 0 11px;
    border-top: 1px solid #a0a0a0;
    box-shadow: inset 0 2px #fff;
}
.checks {
    width: 274px;
    display: flex;
    flex-direction: column;
}
.checks label {
    display: flex;
    align-items: center;
    height: 20px;
    font-size: 12px;
}
.checks input {
    appearance: none;
    width: 13px;
    height: 13px;
    margin: 0 3px 0 0;
    border: 1px solid #333;
    background-color: #fff;
}
.checks input:checked::after {
    content: "";
    display: block;
    width: 8px;
    height: 4px;
    margin: 2px 1px;
    border: solid #333;
    border-width: 0 0 1px 1px;
    transform: rotate(-45deg);
}
.print {
    width: 329px;
    height: 51px;
    display: flex;
    align-items: center;
    justify-content: center;
    gap: 4px;
    margin: 1px 6px 0 0;
    border: 1px solid #8b91a0;
    border-radius: 2px;
    box-shadow: inset 0 0 0 2px #c3cde0;
    background: linear-gradient(#f4f6f8 0%, #e4e9ee 18%, #c9d4de 20%, #eff1f6 92%, #dfe4f0 100%);
    font-size: 11px;
}
.print svg {
    width: 24px;
    height: 21px;
}
.design {
    width: 93px;
    height: 40px;
    margin-top: 7px;
}
```
